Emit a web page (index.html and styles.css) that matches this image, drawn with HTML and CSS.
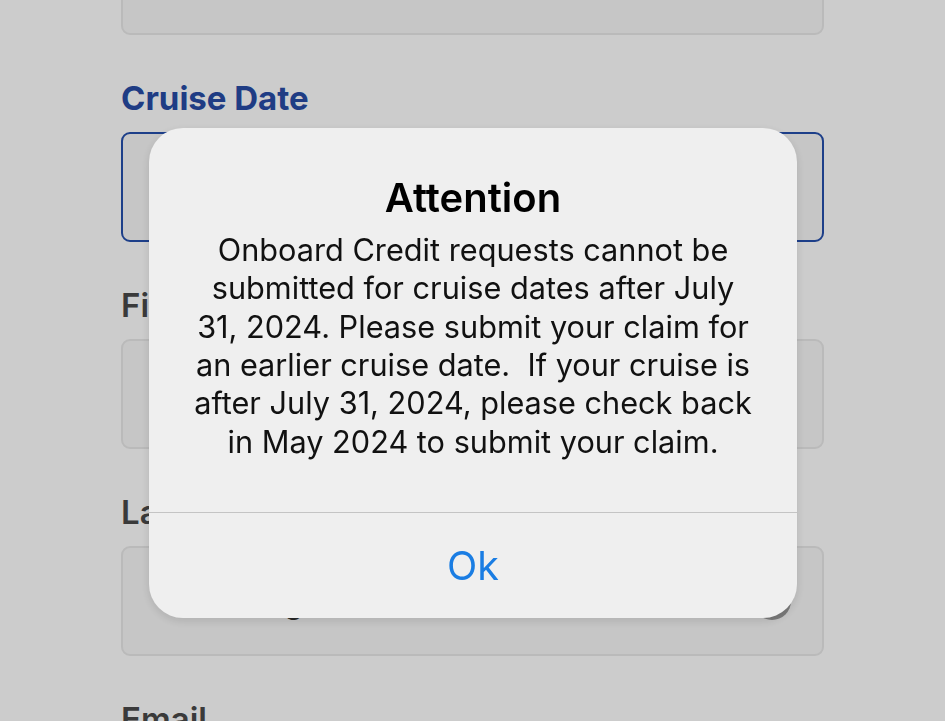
FILE: index.html
```html
<!DOCTYPE html>
<html lang="en">
<head>
<meta charset="utf-8">
<title>Onboard Credit Claim</title>
<link rel="stylesheet" href="styles.css">
</head>
<body>
<main class="form">
  <div class="group">
    <label class="label">Cruise Line</label>
    <div class="field"><span class="value">Royal Caribbean</span><span class="icon"></span></div>
  </div>
  <div class="group">
    <label class="label label-active">Cruise Date</label>
    <div class="field field-focus"><span class="value"></span></div>
  </div>
  <div class="group">
    <label class="label">First Name</label>
    <div class="field"><span class="value"></span></div>
  </div>
  <div class="group">
    <label class="label">Last Name</label>
    <div class="field"><span class="value">Browning</span><span class="icon"></span></div>
  </div>
  <div class="group">
    <label class="label">Email</label>
    <div class="field"><span class="value"></span></div>
  </div>
</main>
<div class="scrim"></div>
<div class="alert" role="alertdialog">
  <div class="alert-body">
    <h2 class="alert-title">Attention</h2>
    <p class="alert-message">Onboard Credit requests cannot be<br>submitted for cruise dates after July<br>31, 2024. Please submit your claim for<br>an earlier cruise date.&nbsp; If your cruise is<br>after July 31, 2024, please check back<br>in May 2024 to submit your claim.</p>
  </div>
  <button class="alert-button" type="button">Ok</button>
</div>
</body>
</html>
```
FILE: styles.css
```css
html, body {
  margin: 0;
  height: 721px;
  overflow: hidden;
}
body {
  background: #ffffff;
  font-family: Inter, "Noto Sans", sans-serif;
}
.form {
  display: flex;
  flex-direction: column;
  gap: 43px;
  padding: 0 121px;
  margin-top: -129px;
}
.group {
  display: flex;
  flex-direction: column;
  gap: 14px;
}
.label {
  font-size: 33px;
  font-weight: 600;
  line-height: 40px;
  color: #494949;
}
.label-active {
  font-weight: 700;
  color: #274ca6;
}
.field {
  height: 110px;
  box-sizing: border-box;
  border: 2px solid #e9e9e9;
  border-radius: 9px;
  background: #f8f8f8;
  display: flex;
  align-items: center;
  padding: 0 31px 0 42px;
}
.field-focus {
  border-color: #254fac;
}
.value {
  flex: 1;
  font-size: 31px;
  color: #333333;
}
.icon {
  width: 38px;
  height: 38px;
  border-radius: 50%;
  background: #9a9a9a;
}
.scrim {
  position: fixed;
  inset: 0;
  background: rgba(0, 0, 0, 0.2);
}
.alert {
  position: fixed;
  top: 128px;
  left: 149px;
  width: 648px;
  height: 490px;
  border-radius: 34px;
  background: #efefef;
  box-shadow: 0 3px 10px rgba(0, 0, 0, 0.12);
  display: flex;
  flex-direction: column;
  text-align: center;
  overflow: hidden;
}
.alert-body {
  flex: 1;
  padding: 45px 10px 0;
}
.alert-title {
  margin: 0 0 7.75px;
  font-size: 40px;
  font-weight: 600;
  line-height: 50px;
  color: #000000;
}
.alert-message {
  margin: 0;
  font-size: 30.7px;
  line-height: 38.4px;
  color: #111111;
}
.alert-button {
  height: 106px;
  border: 0;
  border-top: 1px solid #c4c4c4;
  background: transparent;
  font-family: inherit;
  font-size: 39.5px;
  color: #1a7de3;
  padding: 0;
}
```
